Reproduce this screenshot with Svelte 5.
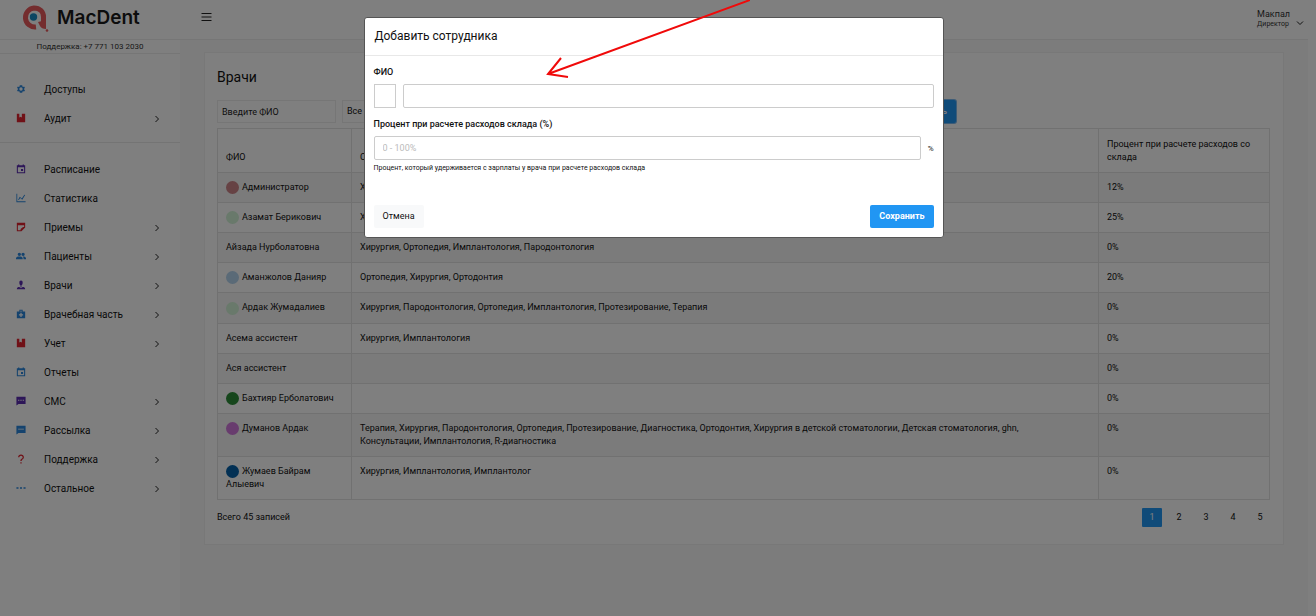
<script>
  const ICONS = {
    cog: 'M19.4 13a7.6 7.6 0 0 0 0-2l2.1-1.7-2-3.4-2.5 1a7.300 7.300 0 0 0-1.700-1L15 3H9l-.4 2.900a7.300 7.300 0 0 0-1.700 1l-2.500-1-2 3.400L4.600 11a7.600 7.600 0 0 0 0 2l-2.100 1.700 2 3.400 2.500-1c.5.400 1.100.800 1.700 1L9 21h6l.4-2.900c.6-.2 1.200-.6 1.700-1l2.500 1 2-3.400zM12 16a4 4 0 1 1 0-8 4 4 0 0 1 0 8z',
    book: 'M2 2h6v9l3-2 3 2V2h8v20H2z',
    calendar: 'M2 3h3V1h3v2h8V1h3v2h3v19H2zM4.500 8v11.500h15V8zM12 12h5v5h-5z',
    chart: 'M1 2h2v18h20v2H1zM5 16l4-7 5 4 6-9 2 1-7 11-5-4-3 5z',
    note: 'M2 2h20v11l-9 9H2zM4.500 8v11.500H11V17l6-5h2.500V8z',
    users: 'M8 4a4 4 0 1 1 0 8 4 4 0 0 1 0-8zM17 4a4 4 0 1 1 0 8 4 4 0 0 1 0-8zM0 20v-3c0-3 5-4 8-4s8 1 8 4v3zM18 20v-3c0-2-1-3-2-4 3 0 8 1 8 4v3z',
    doctor: 'M12 1c3 0 4 2 4 5s-1 7-4 7-4-4-4-7 1-5 4-5zM11 13h2v5h-2zM2 22c0-4 3-5 6-5l4 3 4-3c3 0 6 1 6 5z',
    medkit: 'M8 6V2h8v4h6v16H2V6zM10 4v2h4V4zM10.500 9v3.500H7v3h3.500V19h3v-3.500H17v-3h-3.500V9z',
    message: 'M1 2h22v17H6l-5 4zM5 9v2.500h3V9zM10.500 9v2.500h3V9zM16 9v2.500h3V9z',
    mail: 'M1 2h22v17H6l-5 4zM5 9v2h14V9z',
    question: 'M5 8c0-4 3-7 7-7s7 3 7 7c0 5-5.500 5-5.500 9h-3c0-6 5.500-5 5.500-9 0-2-2-4-4-4S8 6 8 8zM10.500 20h3v3h-3z',
    dots: 'M1 10h5v4H1zM9.500 10h5v4h-5zM18 10h5v4h-5z',
  };

  const BLUE = '#2a86dc';
  const RED = '#e0222e';
  const PURPLE = '#5a2db0';

  const topMenu = [
    { label: 'Доступы', icon: 'cog', color: BLUE },
    { label: 'Аудит', icon: 'book', color: RED, more: true },
  ];

  const mainMenu = [
    { label: 'Расписание', icon: 'calendar', color: PURPLE },
    { label: 'Статистика', icon: 'chart', color: BLUE },
    { label: 'Приемы', icon: 'note', color: RED, more: true },
    { label: 'Пациенты', icon: 'users', color: BLUE, more: true },
    { label: 'Врачи', icon: 'doctor', color: PURPLE, more: true },
    { label: 'Врачебная часть', icon: 'medkit', color: BLUE, more: true },
    { label: 'Учет', icon: 'book', color: RED, more: true },
    { label: 'Отчеты', icon: 'calendar', color: BLUE },
    { label: 'СМС', icon: 'message', color: PURPLE, more: true },
    { label: 'Рассылка', icon: 'mail', color: BLUE, more: true },
    { label: 'Поддержка', icon: 'question', color: RED, more: true },
    { label: 'Остальное', icon: 'dots', color: BLUE, more: true },
  ];

  const doctors = [
    { name: 'Администратор', color: '#cc8488', spec: 'Хирургия', percent: 12 },
    { name: 'Азамат Берикович', color: '#d2f2d6', spec: 'Хирургия', percent: 25 },
    { name: 'Айзада Нурболатовна', spec: 'Хирургия, Ортопедия, Имплантология, Пародонтология', percent: 0 },
    { name: 'Аманжолов Данияр', color: '#b4d4ee', spec: 'Ортопедия, Хирургия, Ортодонтия', percent: 20 },
    { name: 'Ардак Жумадалиев', color: '#d2f2d6', spec: 'Хирургия, Пародонтология, Ортопедия, Имплантология, Протезирование, Терапия', percent: 0 },
    { name: 'Асема ассистент', spec: 'Хирургия, Имплантология', percent: 0 },
    { name: 'Ася ассистент', spec: '', percent: 0 },
    { name: 'Бахтияр Ерболатович', color: '#2c8c38', spec: '', percent: 0 },
    { name: 'Думанов Ардак', color: '#d078dc', spec: 'Терапия, Хирургия, Пародонтология, Ортопедия, Протезирование, Диагностика, Ортодонтия, Хирургия в детской стоматологии, Детская стоматология, ghn, Консультации, Имплантология, R-диагностика', percent: 0 },
    { name: 'Жумаев Байрам Алыевич', color: '#0460a8', spec: 'Хирургия, Имплантология, Имплантолог', percent: 0 },
  ];

  let page = $state(1);
  let search = $state('');
  let fullName = $state('');
  let percent = $state('');
  let open = $state(true);
</script>

{#snippet menu(items)}
  <ul class="menu">
    {#each items as item}
      <li>
        <a href="#menu">
          <svg class="icon" viewBox="0 0 24 24" fill={item.color} fill-rule="evenodd"><path d={ICONS[item.icon]} /></svg>
          <span>{item.label}</span>
          {#if item.more}
            <svg class="chevron" viewBox="0 0 8 8"><path d="M2.500 1l3 3-3 3" /></svg>
          {/if}
        </a>
      </li>
    {/each}
  </ul>
{/snippet}

<div class="page">
  <aside class="sidebar">
    <a class="logo" href="#home">
      <svg viewBox="0 0 28 28">
        <path d="M15 23A9.500 9.500 0 1 1 13 4c6 0 9.500 4 9.500 9v8" fill="none" stroke="#e85a5c" stroke-width="5" />
        <path d="M17 18l8-2v9c-3 0-5-1-6-3z" fill="#e85a5c" />
        <circle cx="12.500" cy="13" r="3.700" fill="#1a8cc4" />
        <circle cx="26" cy="26.500" r="1.300" fill="#e85a5c" />
      </svg>
      <span>MacDent</span>
    </a>
    <div class="support">Поддержка: +7 771 103 2030</div>
    <nav>
      {@render menu(topMenu)}
      <hr />
      {@render menu(mainMenu)}
    </nav>
  </aside>

  <div class="main">
    <header class="topbar">
      <button class="burger" aria-label="Меню">
        <svg viewBox="0 0 10 10"><path d="M0 1.500h10M0 5h10M0 8.500h10" /></svg>
      </button>
      <button class="user">
        <span class="who"><span>Макпал</span><small>Директор</small></span>
        <svg viewBox="0 0 8 8"><path d="M1 2.500l3 3 3-3" /></svg>
      </button>
    </header>

    <main class="card">
      <h1>Врачи</h1>
      <div class="filters">
        <input class="search" type="text" placeholder="Введите ФИО" aria-label="Введите ФИО" bind:value={search} />
        <select aria-label="Специальность"><option>Все</option></select>
        <button class="add" onclick={() => (open = true)}>Добавить</button>
      </div>

      <table>
        <thead>
          <tr>
            <th class="col-name">ФИО</th>
            <th>Специальность</th>
            <th class="col-percent">Процент при расчете расходов со склада</th>
          </tr>
        </thead>
        <tbody>
          {#each doctors as d}
            <tr>
              <td>{#if d.color}<span class="dot" style="background: {d.color}"></span>{/if}{d.name}</td>
              <td class="spec">{d.spec}</td>
              <td>{d.percent}%</td>
            </tr>
          {/each}
        </tbody>
      </table>

      <footer class="bottom">
        <span>Всего 45 записей</span>
        <div class="pages">
          {#each [1, 2, 3, 4, 5] as n}
            <button class:active={page === n} onclick={() => (page = n)}>{n}</button>
          {/each}
        </div>
      </footer>
    </main>
  </div>
</div>

{#if open}
  <div class="overlay">
    <div class="modal" role="dialog" aria-modal="true" aria-labelledby="modal-title">
      <h2 id="modal-title">Добавить сотрудника</h2>
      <form onsubmit={(e) => e.preventDefault()}>
        <label for="full-name">ФИО</label>
        <div class="row">
          <button type="button" class="swatch" aria-label="Цвет"></button>
          <input id="full-name" type="text" bind:value={fullName} />
        </div>
        <label for="percent">Процент при расчете расходов склада (%)</label>
        <div class="row">
          <input id="percent" type="text" placeholder="0 - 100%" bind:value={percent} />
          <small>%</small>
        </div>
        <p class="hint">Процент, который удерживается с зарплаты у врача при расчете расходов склада</p>
        <div class="actions">
          <button type="button" class="cancel" onclick={() => (open = false)}>Отмена</button>
          <button type="submit" class="save">Сохранить</button>
        </div>
      </form>
    </div>
    <svg class="arrow" viewBox="0 0 204 80"><path d="M204 0L2 74M15 58L2 74l20 3" /></svg>
  </div>
{/if}

<style>
  :global(body) {
    background: #fff;
    font-family: Roboto, 'Noto Sans', sans-serif;
    font-size: 9px;
    line-height: 13px;
    color: #111;
  }

  button,
  input,
  select {
    font: inherit;
    color: inherit;
    box-sizing: border-box;
    margin: 0;
  }

  button {
    border: 0;
    background: none;
    padding: 0;
  }

  a {
    color: inherit;
    text-decoration: none;
  }

  .page {
    display: flex;
    min-height: 100vh;
    margin-right: 8px;
    background: #f8f8f8;
  }

  /* sidebar */
  .sidebar {
    flex: 0 0 180px;
    background: #fff;
  }

  .logo {
    display: flex;
    align-items: center;
    gap: 8px;
    height: 40px;
    padding: 0 0 4px 21px;
    box-sizing: border-box;
    border-bottom: 1px solid #ececec;
    font: 600 19px/24px Inter, sans-serif;
    color: #1a1a1a;
  }

  .logo svg {
    width: 28px;
    height: 28px;
  }

  .support {
    text-align: center;
    font-size: 8px;
    color: #333;
    border-bottom: 1px solid #ececec;
  }

  nav {
    padding-top: 21px;
  }

  hr {
    margin: 9px 0 12px;
    border: 0;
    border-top: 1px solid #e8e8e8;
  }

  .menu {
    list-style: none;
    margin: 0;
    padding: 0;
  }

  .menu a {
    display: flex;
    align-items: center;
    height: 29px;
    padding: 0 19px 0 16px;
    font-size: 10px;
    line-height: 14px;
  }

  .icon {
    width: 10px;
    height: 10px;
    margin: 0 18px 2px 0;
  }

  .chevron {
    width: 8px;
    height: 8px;
    margin-left: auto;
  }

  .chevron path,
  .user path,
  .burger path {
    fill: none;
    stroke: #222;
  }

  /* top bar */
  .main {
    flex: 1;
    min-width: 0;
  }

  .topbar {
    display: flex;
    justify-content: space-between;
    height: 40px;
    padding: 0 4px 0 21px;
    box-sizing: border-box;
    background: #fff;
    border-bottom: 1px solid #ececec;
  }

  .burger {
    height: 34px;
  }

  .burger svg {
    display: block;
    width: 11px;
    height: 10px;
  }

  .user {
    display: flex;
    align-items: center;
    gap: 6px;
    height: 37px;
    text-align: left;
    line-height: 10px;
    color: #333;
  }

  .who {
    display: flex;
    flex-direction: column;
  }

  .user small {
    font-size: 7px;
  }

  .user svg {
    width: 8px;
    height: 8px;
    margin-top: 8px;
  }

  /* list of doctors */
  .card {
    margin: 12px 24px 24px;
    padding: 13px 13px 14px 12px;
    background: #fff;
    border: 1px solid #f0f0f0;
  }

  h1 {
    margin: 2px 0 14px;
    font-size: 14px;
    line-height: 18px;
    font-weight: 400;
    color: #111;
  }

  .filters {
    display: flex;
    gap: 6px;
    max-width: 739px;
    margin-bottom: 5px;
  }

  .filters input,
  .filters select {
    width: 119px;
    height: 23px;
    padding: 0 4px;
    border: 1px solid #ececec;
    background: #fff;
    appearance: none;
  }

  .filters input::placeholder {
    color: #222;
    opacity: 1;
  }

  .add {
    height: 23px;
    margin-left: auto;
    padding: 0 9px;
    border-radius: 2px;
    background: #2196f3;
    box-shadow: 0 0 0 1px #7ab8ee;
    color: #fff;
    font-weight: 500;
  }

  table {
    width: 100%;
    border-collapse: collapse;
    table-layout: fixed;
  }

  th,
  td {
    padding: 8px;
    border: 1px solid #e2e2e2;
    text-align: left;
    vertical-align: top;
    font-weight: 400;
  }

  th {
    padding-top: 9px;
    vertical-align: bottom;
  }

  .col-name {
    width: 117px;
  }

  .col-percent {
    width: 154px;
  }

  .spec {
    padding-right: 32px;
  }

  tbody tr:nth-child(odd) {
    background: #f6f6f6;
  }

  .dot {
    display: inline-block;
    width: 13px;
    height: 13px;
    margin-right: 3px;
    border-radius: 50%;
    vertical-align: middle;
  }

  .bottom {
    display: flex;
    align-items: center;
    justify-content: space-between;
    padding: 8px 0 3px;
  }

  .pages {
    display: flex;
    gap: 7px;
  }

  .pages button {
    width: 20px;
    height: 19px;
    border-radius: 1px;
  }

  .pages .active {
    background: #2196f3;
    color: #fff;
  }

  /* dialog */
  .overlay {
    position: fixed;
    inset: 0;
    display: flex;
    justify-content: center;
    align-items: flex-start;
    padding: 17px 9px 0 0;
    background: rgba(0, 0, 0, 0.5);
  }

  .modal {
    flex: 0 1 580px;
    box-sizing: border-box;
    background: #fff;
    border: 1px solid #555;
    border-radius: 3px;
  }

  h2 {
    margin: 0;
    padding: 10px 10px 11px;
    border-bottom: 1px solid #e8e8e8;
    font-size: 12px;
    line-height: 16px;
    font-weight: 400;
  }

  form {
    padding: 10px 9px 9px;
  }

  label {
    display: block;
    margin-bottom: 5px;
    font-weight: 500;
  }

  .row {
    display: flex;
    align-items: center;
    gap: 7px;
    margin-bottom: 10px;
  }

  .row input {
    flex: 1;
    min-width: 0;
    height: 24px;
    padding: 0 8px;
    border: 1px solid #ccc;
    border-radius: 2px;
  }

  .row input::placeholder {
    color: #bbb;
    opacity: 1;
  }

  .row small {
    font-size: 8px;
  }

  .swatch {
    width: 22px;
    height: 24px;
    border: 1px solid #ccc;
  }

  .hint {
    margin: -8px 0 30px;
    font-size: 7px;
  }

  .actions {
    display: flex;
    justify-content: space-between;
  }

  .actions button {
    height: 23px;
    padding: 0 9px;
    border-radius: 2px;
  }

  .cancel {
    background: #f8f9fa;
  }

  .actions .save {
    background: #2196f3;
    color: #fff;
    font-weight: 700;
  }

  /* pointer drawn over the dialog */
  .arrow {
    position: absolute;
    top: 0;
    left: 546px;
    width: 204px;
    height: 80px;
  }

  .arrow path {
    fill: none;
    stroke: #f00a0a;
    stroke-width: 2;
  }
</style>
